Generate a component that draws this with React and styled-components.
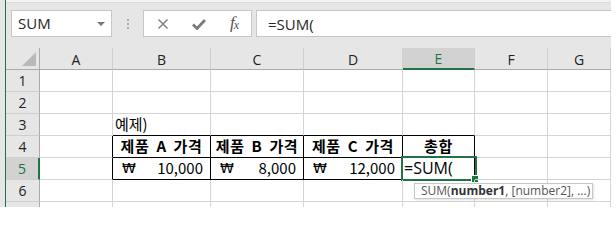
import React from 'react';
import styled, { createGlobalStyle, css } from 'styled-components';

const GlobalStyle = createGlobalStyle`
  * { box-sizing: border-box; }
  body {
    margin: 0;
    background: #ffffff;
    font-family: "Open Sans", "Noto Sans CJK KR", sans-serif;
  }
`

const GREEN = '#217346'
const GRID = '#d4d4d4'

const Frame = styled.div`
  display: flex;
  width: 611px;
  height: 207px;
  padding-left: 5px;
  background: #e6e6e6;
  overflow: hidden;
`
const Window = styled.div`
  flex: 1;
  display: flex;
  flex-direction: column;
  border-left: 1px solid ${GREEN};
  min-width: 0;
`
const FormulaBar = styled.div`
  display: flex;
  align-items: flex-start;
  height: 48px;
  flex-shrink: 0;
  padding: 10px 0 0 5px;
  background: linear-gradient(#f2f2f2 0 2px, #dadada 2px 3px, #e6e6e6 3px);
`
const NameBox = styled.div`
  display: flex;
  align-items: center;
  justify-content: space-between;
  width: 101px;
  height: 27px;
  padding: 0 6px 2px 6px;
  background: #fff;
  border: 1px solid #c6c6c6;
  color: #262626;
  font-family: "Open Sans", sans-serif;
  font-size: 15px;
`
const DropArrow = styled.span`
  width: 0;
  height: 0;
  margin-top: 2px;
  border-left: 4px solid transparent;
  border-right: 4px solid transparent;
  border-top: 4px solid #777;
`
const Grip = styled.div`
  display: flex;
  flex-direction: column;
  align-items: center;
  justify-content: center;
  gap: 2px;
  width: 31px;
  height: 27px;
  span {
    width: 2px;
    height: 2px;
    background: #a8a8a8;
  }
`
const FxBox = styled.div`
  display: grid;
  grid-template-columns: 37px 36px 34px;
  width: 109px;
  height: 27px;
  background: #fff;
  border: 1px solid #c6c6c6;
`
const FxButton = styled.div`
  display: flex;
  align-items: center;
  justify-content: center;
  color: #7a7a7a;
`
const FxText = styled.span`
  font-family: "Liberation Serif", serif;
  font-style: italic;
  font-size: 17px;
  color: #555;
  letter-spacing: -1px;
  margin-top: -2px;
  sub {
    font-size: 12px;
    vertical-align: -1px;
  }
`
const FormulaInput = styled.div`
  flex: 1;
  height: 27px;
  margin-left: 4px;
  padding: 2px 0 0 11px;
  background: #fff;
  border: 1px solid #c6c6c6;
  border-right: none;
  color: #262626;
  font-family: "Open Sans", sans-serif;
  font-size: 15px;
  line-height: 22px;
`
const Sheet = styled.div`
  display: grid;
  grid-template-columns: 34px 73px 98px 93px 99px 72px 73px 63px;
  grid-auto-rows: 22px;
  background: #fff;
`
const Corner = styled.div`
  display: flex;
  align-items: flex-end;
  justify-content: flex-end;
  padding: 0 3px 3px 0;
  background: #e6e6e6;
  border-right: 1px solid #ababab;
  border-bottom: 1px solid #ababab;
  &::after {
    content: '';
    width: 0;
    height: 0;
    border-left: 14px solid transparent;
    border-bottom: 14px solid #b9b9b9;
  }
`
const ColHeader = styled.div`
  display: flex;
  align-items: center;
  justify-content: center;
  padding-top: 1px;
  background: ${p => (p.$active ? '#d2d2d2' : '#e6e6e6')};
  border-right: 1px solid #cfcfcf;
  border-bottom: ${p => (p.$active ? `2px solid ${GREEN}` : '1px solid #ababab')};
  color: ${p => (p.$active ? GREEN : '#222')};
  font-family: "Open Sans", sans-serif;
  font-size: 14px;
`
const RowHeader = styled.div`
  display: flex;
  align-items: center;
  justify-content: center;
  background: ${p => (p.$active ? '#d2d2d2' : '#e6e6e6')};
  border-right: ${p => (p.$active ? `2px solid ${GREEN}` : '1px solid #ababab')};
  border-bottom: 1px solid #cfcfcf;
  color: ${p => (p.$active ? GREEN : '#222')};
  font-family: "Open Sans", sans-serif;
  font-size: 14px;
`
const Cell = styled.div`
  position: relative;
  display: flex;
  align-items: flex-end;
  padding: 0 2px 1px 2px;
  border-right: 1px solid ${p => (p.$inkRight ? '#000' : GRID)};
  border-bottom: 1px solid ${p => (p.$inkBottom ? '#000' : GRID)};
  color: #000;
  font-family: "Noto Sans CJK KR", sans-serif;
  font-size: 15px;
  line-height: 20px;
  white-space: nowrap;
  ${p => p.$bold && css`
    justify-content: center;
    font-weight: 700;
    word-spacing: 3px;
    letter-spacing: 0.6px;
  `}
  ${p => p.$money && css`
    justify-content: space-between;
    padding: 0 7px 1px 9px;
  `}
`
const Won = styled.span`
  font-family: "DejaVu Sans", sans-serif;
  font-size: 14px;
`
const Selection = styled.div`
  position: absolute;
  top: -2px;
  left: -2px;
  right: -3px;
  bottom: -2px;
  border: 2px solid ${GREEN};
  pointer-events: none;
  &::after {
    content: '';
    position: absolute;
    right: -4px;
    bottom: -4px;
    width: 6px;
    height: 6px;
    background: ${GREEN};
    border: 1px solid #fff;
  }
`
const EditText = styled.span`
  font-family: "Open Sans", sans-serif;
  font-size: 16px;
  margin-left: -1px;
`
const Tooltip = styled.div`
  position: absolute;
  top: 25px;
  left: 11px;
  z-index: 2;
  width: 179px;
  height: 16px;
  padding: 0 0 0 6px;
  background: #fff;
  border: 1px solid #c6c6c6;
  box-shadow: 1px 1px 2px rgba(0, 0, 0, 0.12);
  color: #555;
  font-family: "Open Sans", sans-serif;
  font-size: 12px;
  font-weight: 400;
  line-height: 14px;
  b { color: #333; }
`

const columns = ['A', 'B', 'C', 'D', 'E', 'F', 'G']

const cells = {
  'B3': { text: '예제)' },
  'B4': { text: '제품 A 가격', bold: true },
  'C4': { text: '제품 B 가격', bold: true },
  'D4': { text: '제품 C 가격', bold: true },
  'E4': { text: '총합', bold: true },
  'B5': { money: '10,000' },
  'C5': { money: '8,000' },
  'D5': { money: '12,000' },
  'E5': { edit: '=SUM(' },
}

// 표 테두리 범위 B4:E5
const inTable = (c, r) => c >= 1 && c <= 4 && r >= 4 && r <= 5

function CloseIcon() {
  return (
    <svg width="12" height="12" viewBox="0 0 12 12">
      <path d="M1.5 1.5 L10.5 10.5 M10.5 1.5 L1.5 10.5" stroke="#7a7a7a" strokeWidth="1.4" fill="none" />
    </svg>
  )
}

function CheckIcon() {
  return (
    <svg width="14" height="12" viewBox="0 0 14 12">
      <path d="M1 6.5 L5 10.5 L13 2" stroke="#7a7a7a" strokeWidth="2.8" fill="none" />
    </svg>
  )
}

function SheetCell({ c, r }) {
  const key = columns[c] + r
  const data = cells[key] || {}
  const inkRight = inTable(c, r) || inTable(c + 1, r)
  const inkBottom = inTable(c, r) || inTable(c, r + 1)

  return (
    <Cell $inkRight={inkRight} $inkBottom={inkBottom} $bold={data.bold} $money={!!data.money}>
      {data.text}
      {data.money && <><Won>₩</Won><span>{data.money}</span></>}
      {data.edit && (
        <>
          <EditText>{data.edit}</EditText>
          <Selection />
          <Tooltip>SUM(<b>number1</b>, [number2], ...)</Tooltip>
        </>
      )}
    </Cell>
  )
}

export default function App() {
  const rows = [1, 2, 3, 4, 5, 6, 7]

  return (
    <>
      <GlobalStyle />
      <Frame>
        <Window>
          <FormulaBar>
            <NameBox>SUM<DropArrow /></NameBox>
            <Grip><span /><span /><span /></Grip>
            <FxBox>
              <FxButton><CloseIcon /></FxButton>
              <FxButton><CheckIcon /></FxButton>
              <FxButton><FxText>f<sub>x</sub></FxText></FxButton>
            </FxBox>
            <FormulaInput>=SUM(</FormulaInput>
          </FormulaBar>
          <Sheet>
            <Corner />
            {columns.map(col => (
              <ColHeader key={col} $active={col === 'E'}>{col}</ColHeader>
            ))}
            {rows.map(r => (
              <React.Fragment key={r}>
                {/* 7행은 화면 아래로 잘려 번호가 보이지 않음 */}
                <RowHeader $active={r === 5}>{r < 7 ? r : null}</RowHeader>
                {columns.map((col, c) => <SheetCell key={col} c={c} r={r} />)}
              </React.Fragment>
            ))}
          </Sheet>
        </Window>
      </Frame>
    </>
  )
}
